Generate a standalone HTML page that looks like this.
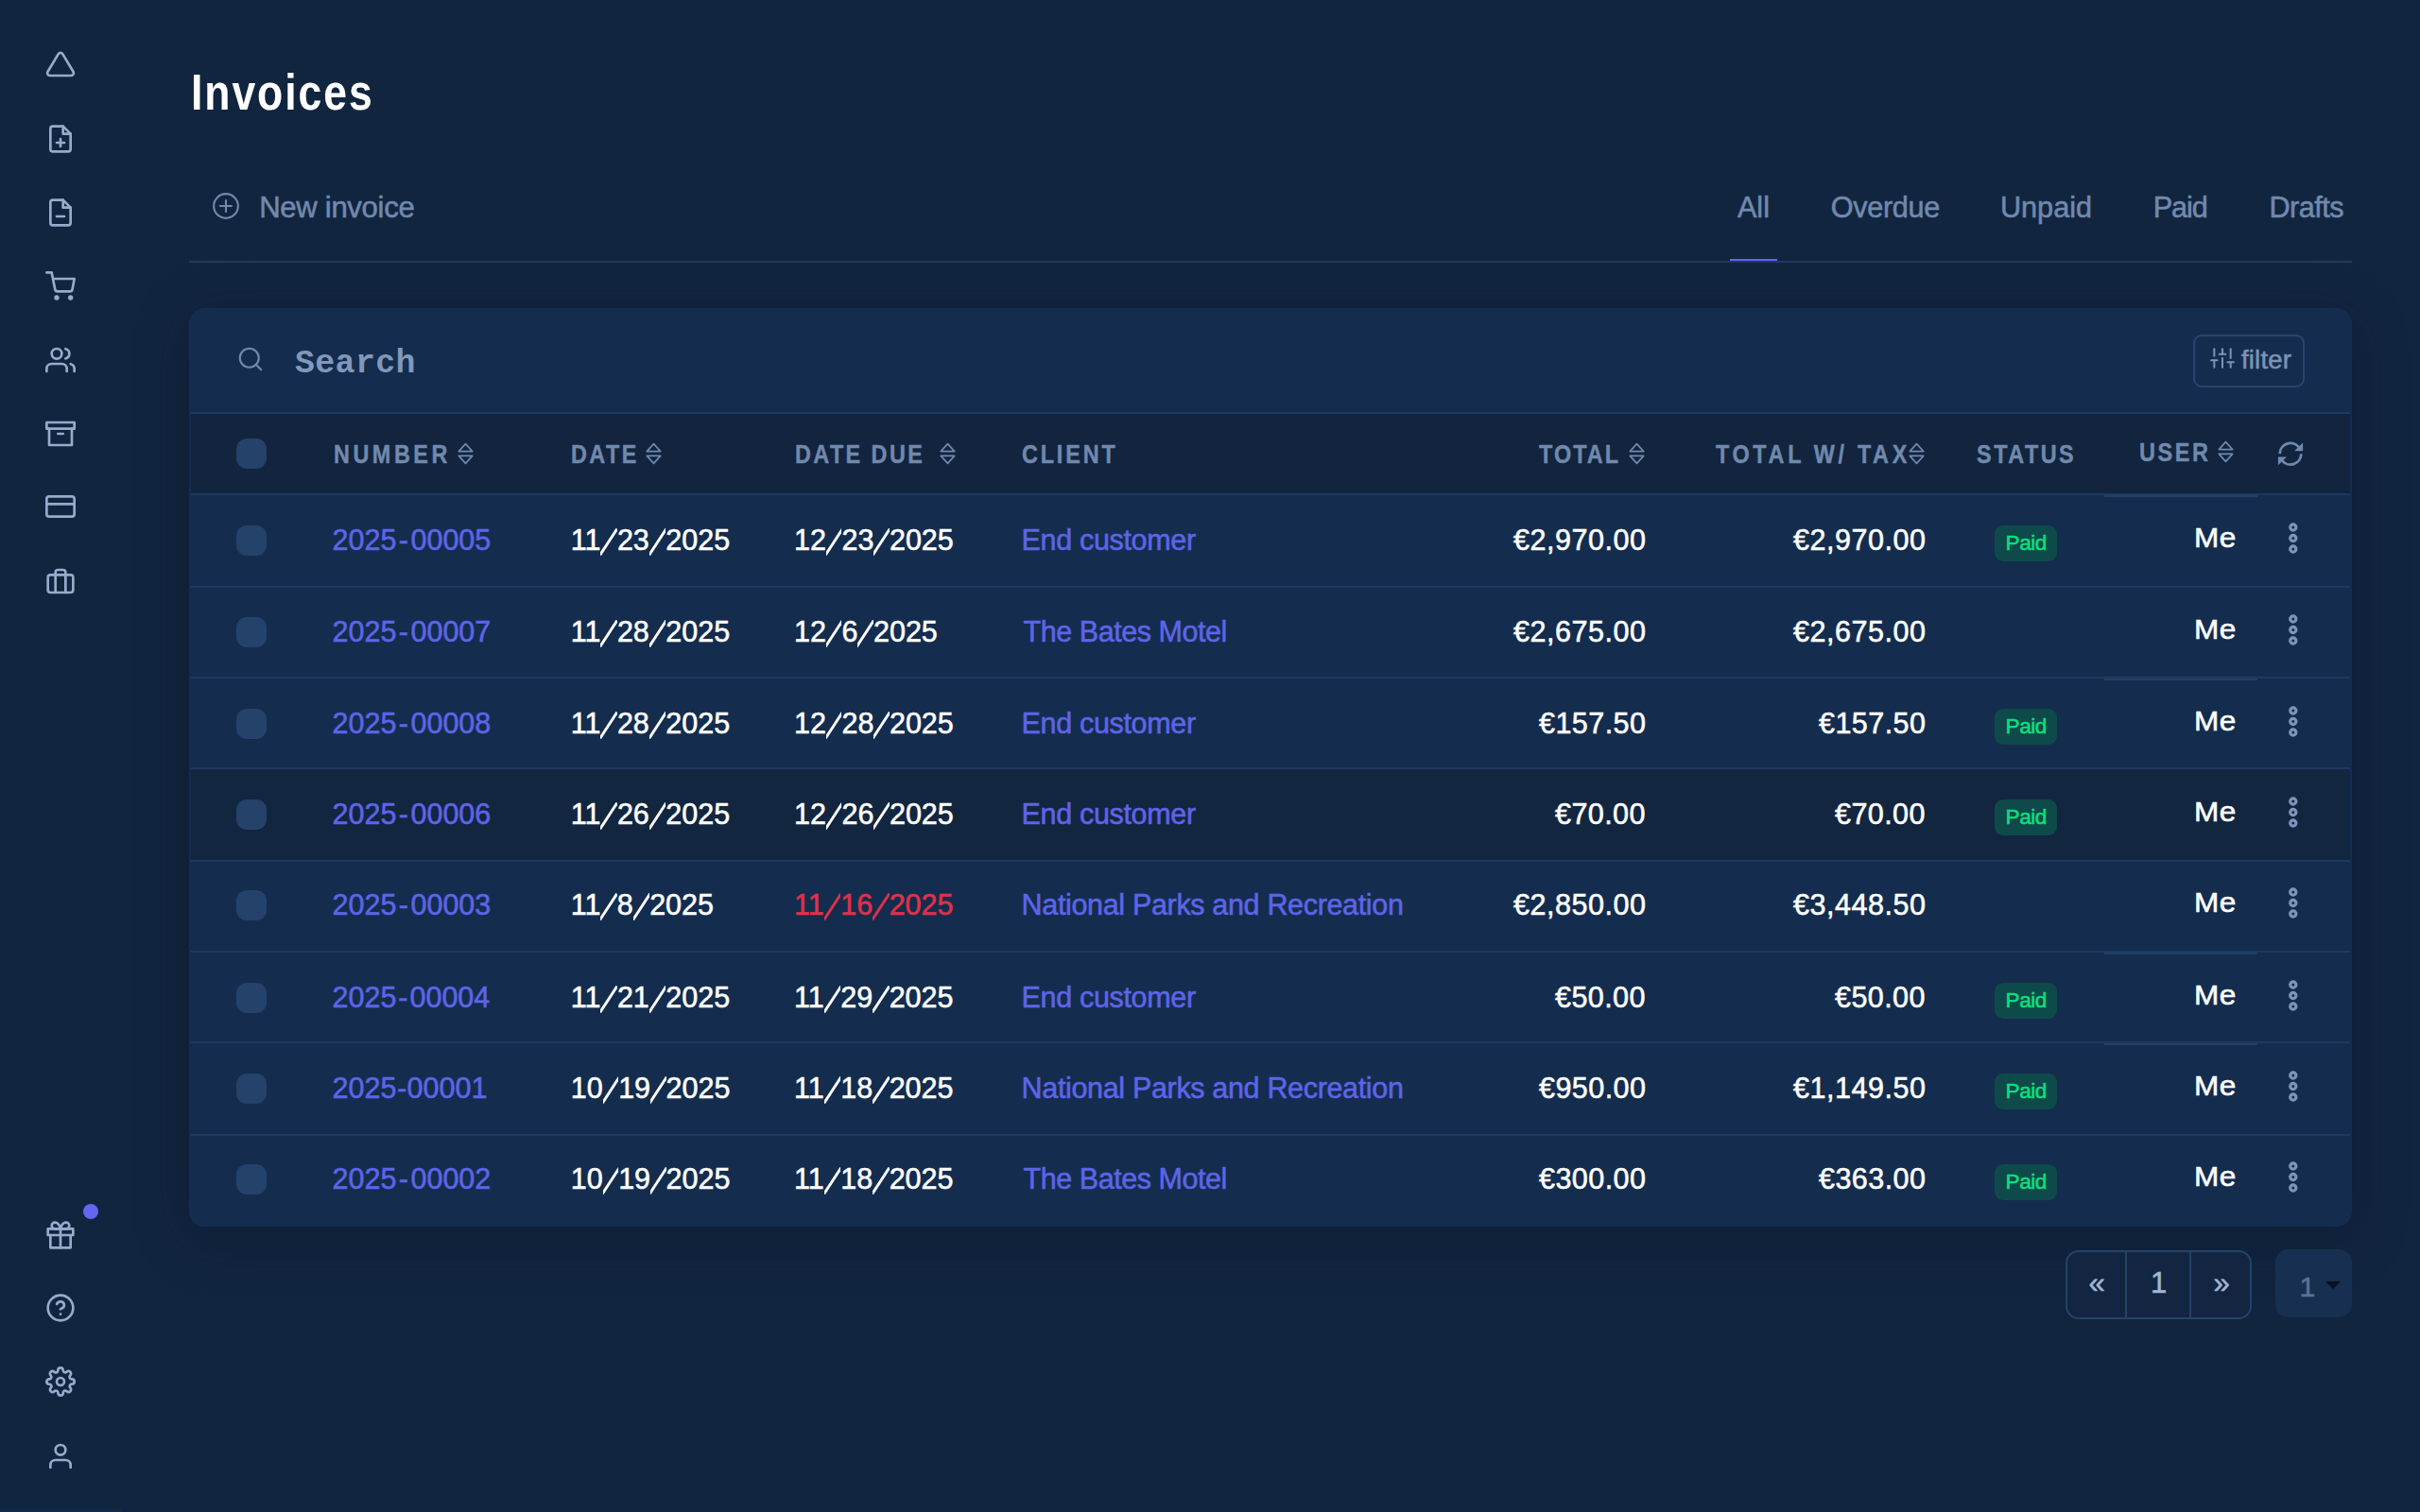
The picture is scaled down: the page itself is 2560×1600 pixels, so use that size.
<!DOCTYPE html>
<html><head><meta charset="utf-8"><title>Invoices</title>
<style>
html,body{margin:0;padding:0;}
body{width:2560px;height:1600px;overflow:hidden;background:#12253f;position:relative;}
.b,.ic,.t{position:absolute;}
.t{white-space:pre;}
</style></head><body>
<svg class='ic' style='left:48px;top:52.25px;width:32px;height:32px' viewBox='0 0 24 24' fill='none' stroke='#97abcc' stroke-width='2.0' stroke-linecap='round' stroke-linejoin='round'><path d='M10.29 3.86L1.82 18a2 2 0 0 0 1.71 3h16.94a2 2 0 0 0 1.71-3L13.71 3.86a2 2 0 0 0-3.42 0z'/></svg><svg class='ic' style='left:48px;top:130.5px;width:32px;height:32px' viewBox='0 0 24 24' fill='none' stroke='#97abcc' stroke-width='2.0' stroke-linecap='round' stroke-linejoin='round'><path d='M14 2H6a2 2 0 0 0-2 2v16a2 2 0 0 0 2 2h12a2 2 0 0 0 2-2V8z'/><polyline points='14 2 14 8 20 8'/><line x1='12' y1='18' x2='12' y2='12'/><line x1='9' y1='15' x2='15' y2='15'/></svg><svg class='ic' style='left:48px;top:208.8px;width:32px;height:32px' viewBox='0 0 24 24' fill='none' stroke='#97abcc' stroke-width='2.0' stroke-linecap='round' stroke-linejoin='round'><path d='M14 2H6a2 2 0 0 0-2 2v16a2 2 0 0 0 2 2h12a2 2 0 0 0 2-2V8z'/><polyline points='14 2 14 8 20 8'/><line x1='9' y1='15' x2='15' y2='15'/></svg><svg class='ic' style='left:48px;top:286.7px;width:32px;height:32px' viewBox='0 0 24 24' fill='none' stroke='#97abcc' stroke-width='2.0' stroke-linecap='round' stroke-linejoin='round'><circle cx='9' cy='21' r='1'/><circle cx='20' cy='21' r='1'/><path d='M1 1h4l2.68 13.39a2 2 0 0 0 2 1.61h9.72a2 2 0 0 0 2-1.61L23 6H6'/></svg><svg class='ic' style='left:48px;top:364.5px;width:32px;height:32px' viewBox='0 0 24 24' fill='none' stroke='#97abcc' stroke-width='2.0' stroke-linecap='round' stroke-linejoin='round'><path d='M17 21v-2a4 4 0 0 0-4-4H5a4 4 0 0 0-4 4v2'/><circle cx='9' cy='7' r='4'/><path d='M23 21v-2a4 4 0 0 0-3-3.87'/><path d='M16 3.13a4 4 0 0 1 0 7.75'/></svg><svg class='ic' style='left:48px;top:442.5px;width:32px;height:32px' viewBox='0 0 24 24' fill='none' stroke='#97abcc' stroke-width='2.0' stroke-linecap='round' stroke-linejoin='round'><polyline points='21 8 21 21 3 21 3 8'/><rect x='1' y='3' width='22' height='5'/><line x1='10' y1='12' x2='14' y2='12'/></svg><svg class='ic' style='left:48px;top:520.4px;width:32px;height:32px' viewBox='0 0 24 24' fill='none' stroke='#97abcc' stroke-width='2.0' stroke-linecap='round' stroke-linejoin='round'><rect x='1' y='4' width='22' height='16' rx='2' ry='2'/><line x1='1' y1='10' x2='23' y2='10'/></svg><svg class='ic' style='left:48px;top:598.8px;width:32px;height:32px' viewBox='0 0 24 24' fill='none' stroke='#97abcc' stroke-width='2.0' stroke-linecap='round' stroke-linejoin='round'><rect x='2' y='7' width='20' height='14' rx='2' ry='2'/><path d='M16 21V5a2 2 0 0 0-2-2h-4a2 2 0 0 0-2 2v16'/></svg><svg class='ic' style='left:48px;top:1290.5px;width:32px;height:32px' viewBox='0 0 24 24' fill='none' stroke='#97abcc' stroke-width='2.0' stroke-linecap='round' stroke-linejoin='round'><polyline points='20 12 20 22 4 22 4 12'/><rect x='2' y='7' width='20' height='5'/><line x1='12' y1='22' x2='12' y2='7'/><path d='M12 7H7.5a2.5 2.5 0 0 1 0-5C11 2 12 7 12 7z'/><path d='M12 7h4.5a2.5 2.5 0 0 0 0-5C13 2 12 7 12 7z'/></svg><svg class='ic' style='left:48px;top:1368.4px;width:32px;height:32px' viewBox='0 0 24 24' fill='none' stroke='#97abcc' stroke-width='2.0' stroke-linecap='round' stroke-linejoin='round'><circle cx='12' cy='12' r='10'/><path d='M9.09 9a3 3 0 0 1 5.83 1c0 2-3 3-3 3'/><line x1='12' y1='17' x2='12.01' y2='17'/></svg><svg class='ic' style='left:48px;top:1446.3px;width:32px;height:32px' viewBox='0 0 24 24' fill='none' stroke='#97abcc' stroke-width='2.0' stroke-linecap='round' stroke-linejoin='round'><circle cx='12' cy='12' r='3'/><path d='M19.4 15a1.65 1.65 0 0 0 .33 1.82l.06.06a2 2 0 0 1 0 2.83 2 2 0 0 1-2.83 0l-.06-.06a1.65 1.65 0 0 0-1.82-.33 1.65 1.65 0 0 0-1 1.51V21a2 2 0 0 1-2 2 2 2 0 0 1-2-2v-.09A1.65 1.65 0 0 0 9 19.4a1.65 1.65 0 0 0-1.82.33l-.06.06a2 2 0 0 1-2.83 0 2 2 0 0 1 0-2.83l.06-.06a1.65 1.65 0 0 0 .33-1.82 1.65 1.65 0 0 0-1.51-1H3a2 2 0 0 1-2-2 2 2 0 0 1 2-2h.09A1.65 1.65 0 0 0 4.6 9a1.65 1.65 0 0 0-.33-1.82l-.06-.06a2 2 0 0 1 0-2.83 2 2 0 0 1 2.83 0l.06.06a1.65 1.65 0 0 0 1.82.33H9a1.65 1.65 0 0 0 1-1.51V3a2 2 0 0 1 2-2 2 2 0 0 1 2 2v.09a1.65 1.65 0 0 0 1 1.51 1.65 1.65 0 0 0 1.82-.33l.06-.06a2 2 0 0 1 2.83 0 2 2 0 0 1 0 2.83l-.06.06a1.65 1.65 0 0 0-.33 1.82V9a1.65 1.65 0 0 0 1.51 1H21a2 2 0 0 1 2 2 2 2 0 0 1-2 2h-.09a1.65 1.65 0 0 0-1.51 1z'/></svg><svg class='ic' style='left:48px;top:1524.75px;width:32px;height:32px' viewBox='0 0 24 24' fill='none' stroke='#97abcc' stroke-width='2.0' stroke-linecap='round' stroke-linejoin='round'><path d='M20 21v-2a4 4 0 0 0-4-4H8a4 4 0 0 0-4 4v2'/><circle cx='12' cy='7' r='4'/></svg><div class='b' style='left:88px;top:1274px;width:16px;height:16px;border-radius:50%;background:#6366f1'></div><div class='b' style='left:0;top:1598px;width:128px;height:2px;background:#152c4c'></div><svg class='ic' style='left:220px;top:198.5px;width:38px;height:38px' viewBox='0 0 38 38' fill='none' stroke='#7089ad' stroke-width='2.1' stroke-linecap='round'><circle cx='19' cy='19' r='12.85'/><path d='M13 19h12M19 13v12'/></svg><div class='b' style='left:200px;top:276px;width:2288px;height:2px;background:#1f3a60'></div><div class='b' style='left:1830px;top:274px;width:50px;height:2px;background:#6366f1'></div><div class='b' style='left:200px;top:326px;width:2288px;height:972px;border-radius:16px;background:#142d4e;box-shadow:0 12px 60px rgba(5,12,25,0.25)'></div><svg class='ic' style='left:250px;top:364.5px;width:30px;height:30px' viewBox='0 0 24 24' fill='none' stroke='#7089ad' stroke-width='1.7' stroke-linecap='round' stroke-linejoin='round'><circle cx='11' cy='11' r='8'/><line x1='21' y1='21' x2='16.65' y2='16.65'/></svg><div class='b' style='left:2320px;top:354px;width:118px;height:56px;border-radius:9px;border:2px solid #27466f;box-sizing:border-box'></div><svg class='ic' style='left:2337.8px;top:366px;width:26px;height:26px' viewBox='0 0 24 24' fill='none' stroke='#7d93b6' stroke-width='1.85' stroke-linecap='round' stroke-linejoin='round'><line x1='4' y1='21' x2='4' y2='14'/><line x1='4' y1='10' x2='4' y2='3'/><line x1='12' y1='21' x2='12' y2='12'/><line x1='12' y1='8' x2='12' y2='3'/><line x1='20' y1='21' x2='20' y2='16'/><line x1='20' y1='12' x2='20' y2='3'/><line x1='1' y1='14' x2='7' y2='14'/><line x1='9' y1='8' x2='15' y2='8'/><line x1='17' y1='16' x2='23' y2='16'/></svg><div class='b' style='left:202px;top:436px;width:2284px;height:2px;background:#1f3a5f'></div><div class='b' style='left:202px;top:438px;width:2284px;height:84px;background:#12243e'></div><div class='b' style='left:250px;top:464px;width:32px;height:32px;border-radius:11px;background:#24426a'></div><svg class='ic' style='left:483.6px;top:468.2px;width:18px;height:24px' viewBox='0 0 18 24' fill='none' stroke='#7089ad' stroke-width='1.7' stroke-linejoin='round' stroke-linecap='round'><path d='M1.3 9.6 L8.5 1.6 L15.7 9.6 Z'/><path d='M1.3 14.4 L8.5 22.4 L15.7 14.4 Z'/></svg><svg class='ic' style='left:683px;top:468.2px;width:18px;height:24px' viewBox='0 0 18 24' fill='none' stroke='#7089ad' stroke-width='1.7' stroke-linejoin='round' stroke-linecap='round'><path d='M1.3 9.6 L8.5 1.6 L15.7 9.6 Z'/><path d='M1.3 14.4 L8.5 22.4 L15.7 14.4 Z'/></svg><svg class='ic' style='left:994px;top:468.2px;width:18px;height:24px' viewBox='0 0 18 24' fill='none' stroke='#7089ad' stroke-width='1.7' stroke-linejoin='round' stroke-linecap='round'><path d='M1.3 9.6 L8.5 1.6 L15.7 9.6 Z'/><path d='M1.3 14.4 L8.5 22.4 L15.7 14.4 Z'/></svg><svg class='ic' style='left:1722.5px;top:468.2px;width:18px;height:24px' viewBox='0 0 18 24' fill='none' stroke='#7089ad' stroke-width='1.7' stroke-linejoin='round' stroke-linecap='round'><path d='M1.3 9.6 L8.5 1.6 L15.7 9.6 Z'/><path d='M1.3 14.4 L8.5 22.4 L15.7 14.4 Z'/></svg><svg class='ic' style='left:2019px;top:468.2px;width:18px;height:24px' viewBox='0 0 18 24' fill='none' stroke='#7089ad' stroke-width='1.7' stroke-linejoin='round' stroke-linecap='round'><path d='M1.3 9.6 L8.5 1.6 L15.7 9.6 Z'/><path d='M1.3 14.4 L8.5 22.4 L15.7 14.4 Z'/></svg><svg class='ic' style='left:2346px;top:466.2px;width:18px;height:24px' viewBox='0 0 18 24' fill='none' stroke='#7089ad' stroke-width='1.7' stroke-linejoin='round' stroke-linecap='round'><path d='M1.3 9.6 L8.5 1.6 L15.7 9.6 Z'/><path d='M1.3 14.4 L8.5 22.4 L15.7 14.4 Z'/></svg><svg class='ic' style='left:2400px;top:460px;width:48px;height:40px' viewBox='2400 460 48 40' fill='none' stroke='#7089ad' stroke-width='2.8'><path d='M2411.70 480.30 A11.3 11.3 0 0 1 2431.66 473.04'/><path d='M2434.30 480.30 A11.3 11.3 0 0 1 2414.34 487.56'/><path d='M2436.1 468.6 L2436.1 477.2 L2427 477.2 Z' fill='#7089ad' stroke='none'/><path d='M2409.9 483.5 L2419 483.5 L2409.9 492.3 Z' fill='#7089ad' stroke='none'/></svg><div class='b' style='left:202px;top:522px;width:2284px;height:2px;background:#1f3a5f'></div><div class='b' style='left:2226px;top:524px;width:162px;height:2px;background:#21406a'></div><div class='b' style='left:202px;top:620px;width:2284px;height:2px;background:#1f3a5f'></div><div class='b' style='left:202px;top:716px;width:2284px;height:2px;background:#1f3a5f'></div><div class='b' style='left:2226px;top:718px;width:162px;height:2px;background:#21406a'></div><div class='b' style='left:202px;top:812px;width:2284px;height:2px;background:#1f3a5f'></div><div class='b' style='left:2226px;top:814px;width:162px;height:2px;background:#21406a'></div><div class='b' style='left:202px;top:910px;width:2284px;height:2px;background:#1f3a5f'></div><div class='b' style='left:202px;top:1006px;width:2284px;height:2px;background:#1f3a5f'></div><div class='b' style='left:2226px;top:1008px;width:162px;height:2px;background:#21406a'></div><div class='b' style='left:202px;top:1102px;width:2284px;height:2px;background:#1f3a5f'></div><div class='b' style='left:2226px;top:1104px;width:162px;height:2px;background:#21406a'></div><div class='b' style='left:202px;top:1200px;width:2284px;height:2px;background:#1f3a5f'></div><div class='b' style='left:202px;top:814px;width:2284px;height:96px;background:#132640'></div><div class='b' style='left:250px;top:556px;width:32px;height:32px;border-radius:11px;background:#24426a'></div><div class='b' style='left:2110px;top:556px;width:66px;height:38px;border-radius:9px;background:#0e4a4a'></div><svg class='ic' style='left:2415px;top:548px;width:22px;height:44px' viewBox='0 0 22 44' fill='none' stroke='#7f95b8' stroke-width='3.2'><circle cx='10.8' cy='10' r='3.1'/><circle cx='10.8' cy='21.5' r='3.1'/><circle cx='10.8' cy='33' r='3.1'/></svg><div class='b' style='left:250px;top:653px;width:32px;height:32px;border-radius:11px;background:#24426a'></div><svg class='ic' style='left:2415px;top:645px;width:22px;height:44px' viewBox='0 0 22 44' fill='none' stroke='#7f95b8' stroke-width='3.2'><circle cx='10.8' cy='10' r='3.1'/><circle cx='10.8' cy='21.5' r='3.1'/><circle cx='10.8' cy='33' r='3.1'/></svg><div class='b' style='left:250px;top:750px;width:32px;height:32px;border-radius:11px;background:#24426a'></div><div class='b' style='left:2110px;top:750px;width:66px;height:38px;border-radius:9px;background:#0e4a4a'></div><svg class='ic' style='left:2415px;top:742px;width:22px;height:44px' viewBox='0 0 22 44' fill='none' stroke='#7f95b8' stroke-width='3.2'><circle cx='10.8' cy='10' r='3.1'/><circle cx='10.8' cy='21.5' r='3.1'/><circle cx='10.8' cy='33' r='3.1'/></svg><div class='b' style='left:250px;top:846px;width:32px;height:32px;border-radius:11px;background:#24426a'></div><div class='b' style='left:2110px;top:846px;width:66px;height:38px;border-radius:9px;background:#0e4a4a'></div><svg class='ic' style='left:2415px;top:838px;width:22px;height:44px' viewBox='0 0 22 44' fill='none' stroke='#7f95b8' stroke-width='3.2'><circle cx='10.8' cy='10' r='3.1'/><circle cx='10.8' cy='21.5' r='3.1'/><circle cx='10.8' cy='33' r='3.1'/></svg><div class='b' style='left:250px;top:942px;width:32px;height:32px;border-radius:11px;background:#24426a'></div><svg class='ic' style='left:2415px;top:934px;width:22px;height:44px' viewBox='0 0 22 44' fill='none' stroke='#7f95b8' stroke-width='3.2'><circle cx='10.8' cy='10' r='3.1'/><circle cx='10.8' cy='21.5' r='3.1'/><circle cx='10.8' cy='33' r='3.1'/></svg><div class='b' style='left:250px;top:1040px;width:32px;height:32px;border-radius:11px;background:#24426a'></div><div class='b' style='left:2110px;top:1040px;width:66px;height:38px;border-radius:9px;background:#0e4a4a'></div><svg class='ic' style='left:2415px;top:1032px;width:22px;height:44px' viewBox='0 0 22 44' fill='none' stroke='#7f95b8' stroke-width='3.2'><circle cx='10.8' cy='10' r='3.1'/><circle cx='10.8' cy='21.5' r='3.1'/><circle cx='10.8' cy='33' r='3.1'/></svg><div class='b' style='left:250px;top:1136px;width:32px;height:32px;border-radius:11px;background:#24426a'></div><div class='b' style='left:2110px;top:1136px;width:66px;height:38px;border-radius:9px;background:#0e4a4a'></div><svg class='ic' style='left:2415px;top:1128px;width:22px;height:44px' viewBox='0 0 22 44' fill='none' stroke='#7f95b8' stroke-width='3.2'><circle cx='10.8' cy='10' r='3.1'/><circle cx='10.8' cy='21.5' r='3.1'/><circle cx='10.8' cy='33' r='3.1'/></svg><div class='b' style='left:250px;top:1232px;width:32px;height:32px;border-radius:11px;background:#24426a'></div><div class='b' style='left:2110px;top:1232px;width:66px;height:38px;border-radius:9px;background:#0e4a4a'></div><svg class='ic' style='left:2415px;top:1224px;width:22px;height:44px' viewBox='0 0 22 44' fill='none' stroke='#7f95b8' stroke-width='3.2'><circle cx='10.8' cy='10' r='3.1'/><circle cx='10.8' cy='21.5' r='3.1'/><circle cx='10.8' cy='33' r='3.1'/></svg><div class='b' style='left:2184.5px;top:1322.5px;width:197px;height:73px;border-radius:14px;border:2px solid #24426a;box-sizing:border-box;background:#132540'></div><div class='b' style='left:2248px;top:1324px;width:2px;height:70px;background:#24426a'></div><div class='b' style='left:2315.5px;top:1324px;width:2px;height:70px;background:#24426a'></div><div class='b' style='left:2406.5px;top:1322px;width:81px;height:72px;border-radius:14px;background:#172f50'></div><svg class='ic' style='left:2459px;top:1355px;width:18px;height:10px' viewBox='0 0 18 10'><path d='M1 1 L17 1 L9 9 Z' fill='#0b1120'/></svg>
<div class='t' style="left:201.50px;top:71.22px;color:#ffffff;font-family:'Liberation Sans',sans-serif;font-size:53.00px;line-height:53.00px;font-weight:bold;letter-spacing:2.296px;transform:scaleX(0.84);transform-origin:0 0;">Invoices</div>
<div class='t' style="left:274.20px;top:203.86px;color:#7189ad;font-family:'Liberation Sans',sans-serif;font-size:31.10px;line-height:31.10px;-webkit-text-stroke:0.55px currentColor;letter-spacing:-0.310px;">New invoice</div>
<div class='t' style="left:1837.90px;top:204.03px;color:#7189ad;font-family:'Liberation Sans',sans-serif;font-size:30.67px;line-height:30.67px;-webkit-text-stroke:0.55px currentColor;">All</div>
<div class='t' style="left:1936.80px;top:204.03px;color:#7189ad;font-family:'Liberation Sans',sans-serif;font-size:30.67px;line-height:30.67px;-webkit-text-stroke:0.55px currentColor;letter-spacing:-0.367px;">Overdue</div>
<div class='t' style="left:2115.90px;top:204.03px;color:#7189ad;font-family:'Liberation Sans',sans-serif;font-size:30.67px;line-height:30.67px;-webkit-text-stroke:0.55px currentColor;">Unpaid</div>
<div class='t' style="left:2277.80px;top:204.03px;color:#7189ad;font-family:'Liberation Sans',sans-serif;font-size:30.67px;line-height:30.67px;-webkit-text-stroke:0.55px currentColor;letter-spacing:-1.133px;">Paid</div>
<div class='t' style="left:2400.50px;top:204.03px;color:#7189ad;font-family:'Liberation Sans',sans-serif;font-size:30.67px;line-height:30.67px;-webkit-text-stroke:0.55px currentColor;letter-spacing:-0.540px;">Drafts</div>
<div class='t' style="left:312.00px;top:368.27px;color:#8198bb;font-family:'Liberation Mono',monospace;font-size:34.90px;line-height:34.90px;font-weight:bold;letter-spacing:0.360px;">Search</div>
<div class='t' style="left:2370.90px;top:366.62px;color:#7d93b6;font-family:'Liberation Sans',sans-serif;font-size:27.50px;line-height:27.50px;-webkit-text-stroke:0.55px currentColor;letter-spacing:0.220px;">filter</div>
<div class='t' style="left:352.60px;top:467.09px;color:#7089ad;font-family:'Liberation Sans',sans-serif;font-size:27.18px;line-height:27.18px;font-weight:bold;-webkit-text-stroke:0.45px currentColor;letter-spacing:4.140px;transform:scaleX(0.86);transform-origin:0 0;">NUMBER</div>
<div class='t' style="left:604.00px;top:467.09px;color:#7089ad;font-family:'Liberation Sans',sans-serif;font-size:27.18px;line-height:27.18px;font-weight:bold;-webkit-text-stroke:0.45px currentColor;letter-spacing:2.868px;transform:scaleX(0.86);transform-origin:0 0;">DATE</div>
<div class='t' style="left:840.60px;top:467.09px;color:#7089ad;font-family:'Liberation Sans',sans-serif;font-size:27.18px;line-height:27.18px;font-weight:bold;-webkit-text-stroke:0.45px currentColor;letter-spacing:2.841px;transform:scaleX(0.86);transform-origin:0 0;">DATE DUE</div>
<div class='t' style="left:1080.70px;top:467.09px;color:#7089ad;font-family:'Liberation Sans',sans-serif;font-size:27.18px;line-height:27.18px;font-weight:bold;-webkit-text-stroke:0.45px currentColor;letter-spacing:3.326px;transform:scaleX(0.86);transform-origin:0 0;">CLIENT</div>
<div class='t' style="left:1628.00px;top:467.09px;color:#7089ad;font-family:'Liberation Sans',sans-serif;font-size:27.18px;line-height:27.18px;font-weight:bold;-webkit-text-stroke:0.45px currentColor;letter-spacing:2.442px;transform:scaleX(0.86);transform-origin:0 0;">TOTAL</div>
<div class='t' style="left:1814.50px;top:467.09px;color:#7089ad;font-family:'Liberation Sans',sans-serif;font-size:27.18px;line-height:27.18px;font-weight:bold;-webkit-text-stroke:0.45px currentColor;letter-spacing:4.271px;transform:scaleX(0.86);transform-origin:0 0;">TOTAL W/ TAX</div>
<div class='t' style="left:2091.30px;top:467.09px;color:#7089ad;font-family:'Liberation Sans',sans-serif;font-size:27.18px;line-height:27.18px;font-weight:bold;-webkit-text-stroke:0.45px currentColor;letter-spacing:2.953px;transform:scaleX(0.86);transform-origin:0 0;">STATUS</div>
<div class='t' style="left:2263.00px;top:465.06px;color:#7089ad;font-family:'Liberation Sans',sans-serif;font-size:27.33px;line-height:27.33px;font-weight:bold;-webkit-text-stroke:0.45px currentColor;letter-spacing:2.984px;transform:scaleX(0.86);transform-origin:0 0;">USER</div>
<div class='t' style="left:351.50px;top:556.46px;color:#5e64e8;font-family:'Liberation Sans',sans-serif;font-size:30.52px;line-height:30.52px;-webkit-text-stroke:0.55px currentColor;">2025<span style='margin:0 2.45px'>-</span>00005</div>
<div class='t' style="left:603.70px;top:556.46px;color:#ffffff;font-family:'Liberation Sans',sans-serif;font-size:30.52px;line-height:30.52px;-webkit-text-stroke:0.55px currentColor;">11<svg width='17.50' height='29' viewBox='0 0 17.50 29' style='vertical-align:-6px'><line x1='-0.25' y1='28.3' x2='17.75' y2='0.7' stroke='currentColor' stroke-width='2.9'/></svg>23<svg width='17.50' height='29' viewBox='0 0 17.50 29' style='vertical-align:-6px'><line x1='-0.25' y1='28.3' x2='17.75' y2='0.7' stroke='currentColor' stroke-width='2.9'/></svg>2025</div>
<div class='t' style="left:840.00px;top:556.46px;color:#ffffff;font-family:'Liberation Sans',sans-serif;font-size:30.52px;line-height:30.52px;-webkit-text-stroke:0.55px currentColor;">12<svg width='16.50' height='29' viewBox='0 0 16.50 29' style='vertical-align:-6px'><line x1='-0.75' y1='28.3' x2='17.25' y2='0.7' stroke='currentColor' stroke-width='2.9'/></svg>23<svg width='16.50' height='29' viewBox='0 0 16.50 29' style='vertical-align:-6px'><line x1='-0.75' y1='28.3' x2='17.25' y2='0.7' stroke='currentColor' stroke-width='2.9'/></svg>2025</div>
<div class='t' style="left:1080.60px;top:556.46px;color:#5e64e8;font-family:'Liberation Sans',sans-serif;font-size:30.52px;line-height:30.52px;-webkit-text-stroke:0.55px currentColor;letter-spacing:-0.345px;">End customer</div>
<div class='t' style="left:1601.10px;top:556.46px;color:#ffffff;font-family:'Liberation Sans',sans-serif;font-size:30.52px;line-height:30.52px;-webkit-text-stroke:0.55px currentColor;letter-spacing:0.500px;">€2,970.00</div>
<div class='t' style="left:1897.10px;top:556.46px;color:#ffffff;font-family:'Liberation Sans',sans-serif;font-size:30.52px;line-height:30.52px;-webkit-text-stroke:0.55px currentColor;letter-spacing:0.500px;">€2,970.00</div>
<div class='t' style="left:2320.80px;top:554.42px;color:#ffffff;font-family:'Liberation Sans',sans-serif;font-size:29.51px;line-height:29.51px;-webkit-text-stroke:0.55px currentColor;letter-spacing:0.374px;transform:scaleX(1.07);transform-origin:0 0;">Me</div>
<div class='t' style="left:2121.60px;top:563.96px;color:#0ddf7d;font-family:'Liberation Sans',sans-serif;font-size:22.60px;line-height:22.60px;-webkit-text-stroke:0.55px currentColor;letter-spacing:-0.533px;">Paid</div>
<div class='t' style="left:351.50px;top:652.76px;color:#5e64e8;font-family:'Liberation Sans',sans-serif;font-size:30.52px;line-height:30.52px;-webkit-text-stroke:0.55px currentColor;">2025<span style='margin:0 2.45px'>-</span>00007</div>
<div class='t' style="left:603.70px;top:652.76px;color:#ffffff;font-family:'Liberation Sans',sans-serif;font-size:30.52px;line-height:30.52px;-webkit-text-stroke:0.55px currentColor;">11<svg width='17.50' height='29' viewBox='0 0 17.50 29' style='vertical-align:-6px'><line x1='-0.25' y1='28.3' x2='17.75' y2='0.7' stroke='currentColor' stroke-width='2.9'/></svg>28<svg width='17.50' height='29' viewBox='0 0 17.50 29' style='vertical-align:-6px'><line x1='-0.25' y1='28.3' x2='17.75' y2='0.7' stroke='currentColor' stroke-width='2.9'/></svg>2025</div>
<div class='t' style="left:840.00px;top:652.76px;color:#ffffff;font-family:'Liberation Sans',sans-serif;font-size:30.52px;line-height:30.52px;-webkit-text-stroke:0.55px currentColor;">12<svg width='16.50' height='29' viewBox='0 0 16.50 29' style='vertical-align:-6px'><line x1='-0.75' y1='28.3' x2='17.25' y2='0.7' stroke='currentColor' stroke-width='2.9'/></svg>6<svg width='16.50' height='29' viewBox='0 0 16.50 29' style='vertical-align:-6px'><line x1='-0.75' y1='28.3' x2='17.25' y2='0.7' stroke='currentColor' stroke-width='2.9'/></svg>2025</div>
<div class='t' style="left:1082.60px;top:652.76px;color:#5e64e8;font-family:'Liberation Sans',sans-serif;font-size:30.52px;line-height:30.52px;-webkit-text-stroke:0.55px currentColor;letter-spacing:-0.457px;">The Bates Motel</div>
<div class='t' style="left:1601.10px;top:652.76px;color:#ffffff;font-family:'Liberation Sans',sans-serif;font-size:30.52px;line-height:30.52px;-webkit-text-stroke:0.55px currentColor;letter-spacing:0.500px;">€2,675.00</div>
<div class='t' style="left:1897.10px;top:652.76px;color:#ffffff;font-family:'Liberation Sans',sans-serif;font-size:30.52px;line-height:30.52px;-webkit-text-stroke:0.55px currentColor;letter-spacing:0.500px;">€2,675.00</div>
<div class='t' style="left:2320.80px;top:650.72px;color:#ffffff;font-family:'Liberation Sans',sans-serif;font-size:29.51px;line-height:29.51px;-webkit-text-stroke:0.55px currentColor;letter-spacing:0.374px;transform:scaleX(1.07);transform-origin:0 0;">Me</div>
<div class='t' style="left:351.50px;top:750.16px;color:#5e64e8;font-family:'Liberation Sans',sans-serif;font-size:30.52px;line-height:30.52px;-webkit-text-stroke:0.55px currentColor;">2025<span style='margin:0 2.45px'>-</span>00008</div>
<div class='t' style="left:603.70px;top:750.16px;color:#ffffff;font-family:'Liberation Sans',sans-serif;font-size:30.52px;line-height:30.52px;-webkit-text-stroke:0.55px currentColor;">11<svg width='17.50' height='29' viewBox='0 0 17.50 29' style='vertical-align:-6px'><line x1='-0.25' y1='28.3' x2='17.75' y2='0.7' stroke='currentColor' stroke-width='2.9'/></svg>28<svg width='17.50' height='29' viewBox='0 0 17.50 29' style='vertical-align:-6px'><line x1='-0.25' y1='28.3' x2='17.75' y2='0.7' stroke='currentColor' stroke-width='2.9'/></svg>2025</div>
<div class='t' style="left:840.00px;top:750.16px;color:#ffffff;font-family:'Liberation Sans',sans-serif;font-size:30.52px;line-height:30.52px;-webkit-text-stroke:0.55px currentColor;">12<svg width='16.50' height='29' viewBox='0 0 16.50 29' style='vertical-align:-6px'><line x1='-0.75' y1='28.3' x2='17.25' y2='0.7' stroke='currentColor' stroke-width='2.9'/></svg>28<svg width='16.50' height='29' viewBox='0 0 16.50 29' style='vertical-align:-6px'><line x1='-0.75' y1='28.3' x2='17.25' y2='0.7' stroke='currentColor' stroke-width='2.9'/></svg>2025</div>
<div class='t' style="left:1080.60px;top:750.16px;color:#5e64e8;font-family:'Liberation Sans',sans-serif;font-size:30.52px;line-height:30.52px;-webkit-text-stroke:0.55px currentColor;letter-spacing:-0.345px;">End customer</div>
<div class='t' style="left:1628.10px;top:750.16px;color:#ffffff;font-family:'Liberation Sans',sans-serif;font-size:30.52px;line-height:30.52px;-webkit-text-stroke:0.55px currentColor;letter-spacing:0.417px;">€157.50</div>
<div class='t' style="left:1924.10px;top:750.16px;color:#ffffff;font-family:'Liberation Sans',sans-serif;font-size:30.52px;line-height:30.52px;-webkit-text-stroke:0.55px currentColor;letter-spacing:0.417px;">€157.50</div>
<div class='t' style="left:2320.80px;top:748.12px;color:#ffffff;font-family:'Liberation Sans',sans-serif;font-size:29.51px;line-height:29.51px;-webkit-text-stroke:0.55px currentColor;letter-spacing:0.374px;transform:scaleX(1.07);transform-origin:0 0;">Me</div>
<div class='t' style="left:2121.60px;top:757.66px;color:#0ddf7d;font-family:'Liberation Sans',sans-serif;font-size:22.60px;line-height:22.60px;-webkit-text-stroke:0.55px currentColor;letter-spacing:-0.533px;">Paid</div>
<div class='t' style="left:351.50px;top:846.36px;color:#5e64e8;font-family:'Liberation Sans',sans-serif;font-size:30.52px;line-height:30.52px;-webkit-text-stroke:0.55px currentColor;">2025<span style='margin:0 2.45px'>-</span>00006</div>
<div class='t' style="left:603.70px;top:846.36px;color:#ffffff;font-family:'Liberation Sans',sans-serif;font-size:30.52px;line-height:30.52px;-webkit-text-stroke:0.55px currentColor;">11<svg width='17.50' height='29' viewBox='0 0 17.50 29' style='vertical-align:-6px'><line x1='-0.25' y1='28.3' x2='17.75' y2='0.7' stroke='currentColor' stroke-width='2.9'/></svg>26<svg width='17.50' height='29' viewBox='0 0 17.50 29' style='vertical-align:-6px'><line x1='-0.25' y1='28.3' x2='17.75' y2='0.7' stroke='currentColor' stroke-width='2.9'/></svg>2025</div>
<div class='t' style="left:840.00px;top:846.36px;color:#ffffff;font-family:'Liberation Sans',sans-serif;font-size:30.52px;line-height:30.52px;-webkit-text-stroke:0.55px currentColor;">12<svg width='16.50' height='29' viewBox='0 0 16.50 29' style='vertical-align:-6px'><line x1='-0.75' y1='28.3' x2='17.25' y2='0.7' stroke='currentColor' stroke-width='2.9'/></svg>26<svg width='16.50' height='29' viewBox='0 0 16.50 29' style='vertical-align:-6px'><line x1='-0.75' y1='28.3' x2='17.25' y2='0.7' stroke='currentColor' stroke-width='2.9'/></svg>2025</div>
<div class='t' style="left:1080.60px;top:846.36px;color:#5e64e8;font-family:'Liberation Sans',sans-serif;font-size:30.52px;line-height:30.52px;-webkit-text-stroke:0.55px currentColor;letter-spacing:-0.345px;">End customer</div>
<div class='t' style="left:1645.10px;top:846.36px;color:#ffffff;font-family:'Liberation Sans',sans-serif;font-size:30.52px;line-height:30.52px;-webkit-text-stroke:0.55px currentColor;letter-spacing:0.400px;">€70.00</div>
<div class='t' style="left:1941.10px;top:846.36px;color:#ffffff;font-family:'Liberation Sans',sans-serif;font-size:30.52px;line-height:30.52px;-webkit-text-stroke:0.55px currentColor;letter-spacing:0.400px;">€70.00</div>
<div class='t' style="left:2320.80px;top:844.32px;color:#ffffff;font-family:'Liberation Sans',sans-serif;font-size:29.51px;line-height:29.51px;-webkit-text-stroke:0.55px currentColor;letter-spacing:0.374px;transform:scaleX(1.07);transform-origin:0 0;">Me</div>
<div class='t' style="left:2121.60px;top:853.86px;color:#0ddf7d;font-family:'Liberation Sans',sans-serif;font-size:22.60px;line-height:22.60px;-webkit-text-stroke:0.55px currentColor;letter-spacing:-0.533px;">Paid</div>
<div class='t' style="left:351.50px;top:942.46px;color:#5e64e8;font-family:'Liberation Sans',sans-serif;font-size:30.52px;line-height:30.52px;-webkit-text-stroke:0.55px currentColor;">2025<span style='margin:0 2.45px'>-</span>00003</div>
<div class='t' style="left:603.70px;top:942.46px;color:#ffffff;font-family:'Liberation Sans',sans-serif;font-size:30.52px;line-height:30.52px;-webkit-text-stroke:0.55px currentColor;">11<svg width='17.40' height='29' viewBox='0 0 17.40 29' style='vertical-align:-6px'><line x1='-0.30' y1='28.3' x2='17.70' y2='0.7' stroke='currentColor' stroke-width='2.9'/></svg>8<svg width='17.40' height='29' viewBox='0 0 17.40 29' style='vertical-align:-6px'><line x1='-0.30' y1='28.3' x2='17.70' y2='0.7' stroke='currentColor' stroke-width='2.9'/></svg>2025</div>
<div class='t' style="left:840.00px;top:942.46px;color:#e2304a;font-family:'Liberation Sans',sans-serif;font-size:30.52px;line-height:30.52px;-webkit-text-stroke:0.55px currentColor;">11<svg width='17.50' height='29' viewBox='0 0 17.50 29' style='vertical-align:-6px'><line x1='-0.25' y1='28.3' x2='17.75' y2='0.7' stroke='currentColor' stroke-width='2.9'/></svg>16<svg width='17.50' height='29' viewBox='0 0 17.50 29' style='vertical-align:-6px'><line x1='-0.25' y1='28.3' x2='17.75' y2='0.7' stroke='currentColor' stroke-width='2.9'/></svg>2025</div>
<div class='t' style="left:1080.60px;top:942.46px;color:#5e64e8;font-family:'Liberation Sans',sans-serif;font-size:30.52px;line-height:30.52px;-webkit-text-stroke:0.55px currentColor;letter-spacing:-0.343px;">National Parks and Recreation</div>
<div class='t' style="left:1601.10px;top:942.46px;color:#ffffff;font-family:'Liberation Sans',sans-serif;font-size:30.52px;line-height:30.52px;-webkit-text-stroke:0.55px currentColor;letter-spacing:0.500px;">€2,850.00</div>
<div class='t' style="left:1897.10px;top:942.46px;color:#ffffff;font-family:'Liberation Sans',sans-serif;font-size:30.52px;line-height:30.52px;-webkit-text-stroke:0.55px currentColor;letter-spacing:0.500px;">€3,448.50</div>
<div class='t' style="left:2320.80px;top:940.42px;color:#ffffff;font-family:'Liberation Sans',sans-serif;font-size:29.51px;line-height:29.51px;-webkit-text-stroke:0.55px currentColor;letter-spacing:0.374px;transform:scaleX(1.07);transform-origin:0 0;">Me</div>
<div class='t' style="left:351.50px;top:1040.16px;color:#5e64e8;font-family:'Liberation Sans',sans-serif;font-size:30.52px;line-height:30.52px;-webkit-text-stroke:0.55px currentColor;">2025<span style='margin:0 1.95px'>-</span>00004</div>
<div class='t' style="left:603.70px;top:1040.16px;color:#ffffff;font-family:'Liberation Sans',sans-serif;font-size:30.52px;line-height:30.52px;-webkit-text-stroke:0.55px currentColor;">11<svg width='17.50' height='29' viewBox='0 0 17.50 29' style='vertical-align:-6px'><line x1='-0.25' y1='28.3' x2='17.75' y2='0.7' stroke='currentColor' stroke-width='2.9'/></svg>21<svg width='17.50' height='29' viewBox='0 0 17.50 29' style='vertical-align:-6px'><line x1='-0.25' y1='28.3' x2='17.75' y2='0.7' stroke='currentColor' stroke-width='2.9'/></svg>2025</div>
<div class='t' style="left:840.00px;top:1040.16px;color:#ffffff;font-family:'Liberation Sans',sans-serif;font-size:30.52px;line-height:30.52px;-webkit-text-stroke:0.55px currentColor;">11<svg width='17.50' height='29' viewBox='0 0 17.50 29' style='vertical-align:-6px'><line x1='-0.25' y1='28.3' x2='17.75' y2='0.7' stroke='currentColor' stroke-width='2.9'/></svg>29<svg width='17.50' height='29' viewBox='0 0 17.50 29' style='vertical-align:-6px'><line x1='-0.25' y1='28.3' x2='17.75' y2='0.7' stroke='currentColor' stroke-width='2.9'/></svg>2025</div>
<div class='t' style="left:1080.60px;top:1040.16px;color:#5e64e8;font-family:'Liberation Sans',sans-serif;font-size:30.52px;line-height:30.52px;-webkit-text-stroke:0.55px currentColor;letter-spacing:-0.345px;">End customer</div>
<div class='t' style="left:1645.10px;top:1040.16px;color:#ffffff;font-family:'Liberation Sans',sans-serif;font-size:30.52px;line-height:30.52px;-webkit-text-stroke:0.55px currentColor;letter-spacing:0.400px;">€50.00</div>
<div class='t' style="left:1941.10px;top:1040.16px;color:#ffffff;font-family:'Liberation Sans',sans-serif;font-size:30.52px;line-height:30.52px;-webkit-text-stroke:0.55px currentColor;letter-spacing:0.400px;">€50.00</div>
<div class='t' style="left:2320.80px;top:1038.12px;color:#ffffff;font-family:'Liberation Sans',sans-serif;font-size:29.51px;line-height:29.51px;-webkit-text-stroke:0.55px currentColor;letter-spacing:0.374px;transform:scaleX(1.07);transform-origin:0 0;">Me</div>
<div class='t' style="left:2121.60px;top:1047.66px;color:#0ddf7d;font-family:'Liberation Sans',sans-serif;font-size:22.60px;line-height:22.60px;-webkit-text-stroke:0.55px currentColor;letter-spacing:-0.533px;">Paid</div>
<div class='t' style="left:351.50px;top:1136.46px;color:#5e64e8;font-family:'Liberation Sans',sans-serif;font-size:30.52px;line-height:30.52px;-webkit-text-stroke:0.55px currentColor;">2025<span style='margin:0 0.50px'>-</span>00001</div>
<div class='t' style="left:603.70px;top:1136.46px;color:#ffffff;font-family:'Liberation Sans',sans-serif;font-size:30.52px;line-height:30.52px;-webkit-text-stroke:0.55px currentColor;">10<svg width='16.50' height='29' viewBox='0 0 16.50 29' style='vertical-align:-6px'><line x1='-0.75' y1='28.3' x2='17.25' y2='0.7' stroke='currentColor' stroke-width='2.9'/></svg>19<svg width='16.50' height='29' viewBox='0 0 16.50 29' style='vertical-align:-6px'><line x1='-0.75' y1='28.3' x2='17.25' y2='0.7' stroke='currentColor' stroke-width='2.9'/></svg>2025</div>
<div class='t' style="left:840.00px;top:1136.46px;color:#ffffff;font-family:'Liberation Sans',sans-serif;font-size:30.52px;line-height:30.52px;-webkit-text-stroke:0.55px currentColor;">11<svg width='17.50' height='29' viewBox='0 0 17.50 29' style='vertical-align:-6px'><line x1='-0.25' y1='28.3' x2='17.75' y2='0.7' stroke='currentColor' stroke-width='2.9'/></svg>18<svg width='17.50' height='29' viewBox='0 0 17.50 29' style='vertical-align:-6px'><line x1='-0.25' y1='28.3' x2='17.75' y2='0.7' stroke='currentColor' stroke-width='2.9'/></svg>2025</div>
<div class='t' style="left:1080.60px;top:1136.46px;color:#5e64e8;font-family:'Liberation Sans',sans-serif;font-size:30.52px;line-height:30.52px;-webkit-text-stroke:0.55px currentColor;letter-spacing:-0.343px;">National Parks and Recreation</div>
<div class='t' style="left:1628.10px;top:1136.46px;color:#ffffff;font-family:'Liberation Sans',sans-serif;font-size:30.52px;line-height:30.52px;-webkit-text-stroke:0.55px currentColor;letter-spacing:0.417px;">€950.00</div>
<div class='t' style="left:1897.10px;top:1136.46px;color:#ffffff;font-family:'Liberation Sans',sans-serif;font-size:30.52px;line-height:30.52px;-webkit-text-stroke:0.55px currentColor;letter-spacing:0.500px;">€1,149.50</div>
<div class='t' style="left:2320.80px;top:1134.42px;color:#ffffff;font-family:'Liberation Sans',sans-serif;font-size:29.51px;line-height:29.51px;-webkit-text-stroke:0.55px currentColor;letter-spacing:0.374px;transform:scaleX(1.07);transform-origin:0 0;">Me</div>
<div class='t' style="left:2121.60px;top:1143.96px;color:#0ddf7d;font-family:'Liberation Sans',sans-serif;font-size:22.60px;line-height:22.60px;-webkit-text-stroke:0.55px currentColor;letter-spacing:-0.533px;">Paid</div>
<div class='t' style="left:351.50px;top:1232.46px;color:#5e64e8;font-family:'Liberation Sans',sans-serif;font-size:30.52px;line-height:30.52px;-webkit-text-stroke:0.55px currentColor;">2025<span style='margin:0 2.45px'>-</span>00002</div>
<div class='t' style="left:603.70px;top:1232.46px;color:#ffffff;font-family:'Liberation Sans',sans-serif;font-size:30.52px;line-height:30.52px;-webkit-text-stroke:0.55px currentColor;">10<svg width='16.50' height='29' viewBox='0 0 16.50 29' style='vertical-align:-6px'><line x1='-0.75' y1='28.3' x2='17.25' y2='0.7' stroke='currentColor' stroke-width='2.9'/></svg>19<svg width='16.50' height='29' viewBox='0 0 16.50 29' style='vertical-align:-6px'><line x1='-0.75' y1='28.3' x2='17.25' y2='0.7' stroke='currentColor' stroke-width='2.9'/></svg>2025</div>
<div class='t' style="left:840.00px;top:1232.46px;color:#ffffff;font-family:'Liberation Sans',sans-serif;font-size:30.52px;line-height:30.52px;-webkit-text-stroke:0.55px currentColor;">11<svg width='17.50' height='29' viewBox='0 0 17.50 29' style='vertical-align:-6px'><line x1='-0.25' y1='28.3' x2='17.75' y2='0.7' stroke='currentColor' stroke-width='2.9'/></svg>18<svg width='17.50' height='29' viewBox='0 0 17.50 29' style='vertical-align:-6px'><line x1='-0.25' y1='28.3' x2='17.75' y2='0.7' stroke='currentColor' stroke-width='2.9'/></svg>2025</div>
<div class='t' style="left:1082.60px;top:1232.46px;color:#5e64e8;font-family:'Liberation Sans',sans-serif;font-size:30.52px;line-height:30.52px;-webkit-text-stroke:0.55px currentColor;letter-spacing:-0.457px;">The Bates Motel</div>
<div class='t' style="left:1628.10px;top:1232.46px;color:#ffffff;font-family:'Liberation Sans',sans-serif;font-size:30.52px;line-height:30.52px;-webkit-text-stroke:0.55px currentColor;letter-spacing:0.417px;">€300.00</div>
<div class='t' style="left:1924.10px;top:1232.46px;color:#ffffff;font-family:'Liberation Sans',sans-serif;font-size:30.52px;line-height:30.52px;-webkit-text-stroke:0.55px currentColor;letter-spacing:0.417px;">€363.00</div>
<div class='t' style="left:2320.80px;top:1230.42px;color:#ffffff;font-family:'Liberation Sans',sans-serif;font-size:29.51px;line-height:29.51px;-webkit-text-stroke:0.55px currentColor;letter-spacing:0.374px;transform:scaleX(1.07);transform-origin:0 0;">Me</div>
<div class='t' style="left:2121.60px;top:1239.96px;color:#0ddf7d;font-family:'Liberation Sans',sans-serif;font-size:22.60px;line-height:22.60px;-webkit-text-stroke:0.55px currentColor;letter-spacing:-0.533px;">Paid</div>
<div class='t' style="left:2209.60px;top:1342.15px;color:#a3b5d2;font-family:'Liberation Sans',sans-serif;font-size:31.00px;line-height:31.00px;-webkit-text-stroke:0.55px currentColor;">«</div>
<div class='t' style="left:2275.00px;top:1342.15px;color:#a3b5d2;font-family:'Liberation Sans',sans-serif;font-size:31.00px;line-height:31.00px;-webkit-text-stroke:0.55px currentColor;">1</div>
<div class='t' style="left:2341.40px;top:1342.15px;color:#a3b5d2;font-family:'Liberation Sans',sans-serif;font-size:31.00px;line-height:31.00px;-webkit-text-stroke:0.55px currentColor;">»</div>
<div class='t' style="left:2432.60px;top:1346.46px;color:#5a7194;font-family:'Liberation Sans',sans-serif;font-size:30.40px;line-height:30.40px;-webkit-text-stroke:0.55px currentColor;">1</div>
</body></html>
